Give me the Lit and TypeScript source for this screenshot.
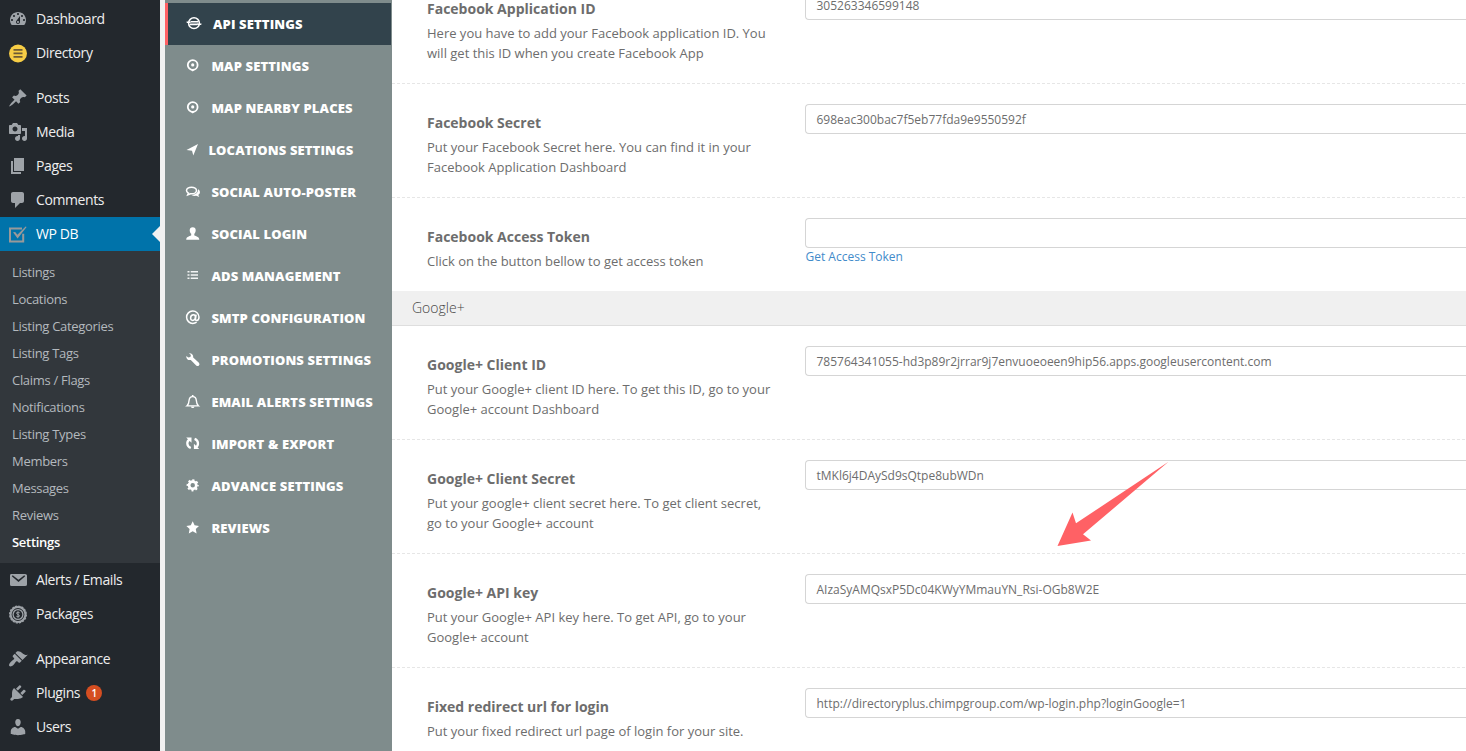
import { LitElement, html, css, svg } from 'lit';
import { customElement } from 'lit/decorators.js';
import { classMap } from 'lit/directives/class-map.js';

type Side = { label: string; icon: string; gap?: boolean; active?: boolean; badge?: string };

const p = (d: string) => svg`<path fill-rule="evenodd" d=${d}></path>`;

const ICONS: Record<string, unknown> = {
  dashboard: p('M3.76 16h12.48c1.1-1.37 1.76-3.11 1.76-5 0-4.42-3.58-8-8-8s-8 3.58-8 8c0 1.89.66 3.63 1.76 5zM10 4c.55 0 1 .45 1 1s-.45 1-1 1-1-.45-1-1 .45-1 1-1zM6 6c.55 0 1 .45 1 1s-.45 1-1 1-1-.45-1-1 .45-1 1-1zm8 0c.55 0 1 .45 1 1s-.45 1-1 1-1-.45-1-1 .45-1 1-1zm-5.370 5.550L12 7v6c0 1.100-.9 2-2 2s-2-.9-2-2c0-.57.24-1.080.63-1.450zM4 10c.55 0 1 .45 1 1s-.45 1-1 1-1-.45-1-1 .45-1 1-1zm12 0c.55 0 1 .45 1 1s-.45 1-1 1-1-.45-1-1 .45-1 1-1zm-5 3c0-.55-.45-1-1-1s-1 .45-1 1 .45 1 1 1 1-.45 1-1z'),
  directory: svg`<circle cx="10" cy="10.5" r="9" fill="#f7cd45"></circle><path d="M5.500 6.900h9M5.500 10.400h9M5.500 13.900h9" stroke="#6d5b35" stroke-width="1.800"></path>`,
  post: p('M10.44 3.02l1.82-1.82 6.36 6.35-1.83 1.82c-1.05-.68-2.48-.57-3.41.36l-.75.75c-.92.93-1.04 2.35-.35 3.41l-1.83 1.82-2.41-2.41-2.8 2.79c-.42.42-3.38 2.71-3.8 2.29s1.86-3.39 2.28-3.81l2.79-2.79L4.1 9.36l1.83-1.82c1.05.69 2.48.57 3.4-.36l.75-.75c.93-.92 1.05-2.35.36-3.41z'),
  media: p('M13 11V4c0-.55-.45-1-1-1h-1.67L9 1H5L3.67 3H2c-.55 0-1 .45-1 1v7c0 .55.45 1 1 1h10c.55 0 1-.45 1-1zM7 4.5c1.38 0 2.5 1.12 2.5 2.5S8.38 9.5 7 9.5 4.5 8.38 4.5 7 5.62 4.5 7 4.5zM14 6h5v10.5c0 1.38-1.12 2.5-2.5 2.5S14 17.88 14 16.5s1.12-2.5 2.5-2.5c.17 0 .34.02.5.05V9h-3V6zm-4 8.05V13h2v3.5c0 1.38-1.12 2.5-2.5 2.5S7 17.88 7 16.5 8.12 14 9.5 14c.17 0 .34.02.5.05z'),
  page: p('M6 15V2h10v13H6zm-1 1h8v2H3V5h2v11z'),
  comment: p('M5 2h9c1.1 0 2 .9 2 2v7c0 1.1-.9 2-2 2h-2l-5 5v-5H5c-1.1 0-2-.9-2-2V4c0-1.1.9-2 2-2z'),
  check: svg`<path d="M14 4.400H2v13h13.200V9.800" fill="none" stroke="currentColor" stroke-width="2"></path><path d="M5 8.200l2.200-.2 2.200 2.800L17.600 2.600l1 .5-9 11.400z"></path>`,
  mail: p('M3 4h14q2 0 2 1.500v9q0 1.500-2 1.500H3.500Q2 16 2 14.500v-9Q2 4 3 4zM3.800 6.300l6.700 5.700 6.700-5.700-.9-1.100-5.800 4.600-5.800-4.600z'),
  coin: svg`<circle cx="10" cy="10.500" r="7.400" fill="none" stroke="currentColor" stroke-width="2"></circle><circle cx="10" cy="10.500" r="8.400" fill="none" stroke="currentColor" stroke-width="1.200" stroke-dasharray="2.200 1.100"></circle><circle cx="10" cy="10.500" r="4.900" fill="none" stroke="currentColor" stroke-width="1.300"></circle><path d="M11.700 8.800q-1.700-1-2.900-.3-.8 1.300 1.200 2 2 .7 1.200 2-1.200.8-2.900-.3M10 7.300v6.400" fill="none" stroke="currentColor" stroke-width="1"></path>`,
  brush: p('M14.48 11.06L7.41 3.99l1.5-1.5c.5-.56 2.3-.47 3.51.32 1.21.8 1.43 1.28 2.91 2.1 1.18.64 2.45 1.26 4.45.85zm-.71.71L6.7 4.7 4.93 6.47c-.39.39-.39 1.02 0 1.41l1.06 1.06c.39.39.39 1.03 0 1.42-.6.6-1.43 1.11-2.21 1.69-.35.26-.7.53-1.01.84C1.43 14.23.4 16.08 1.4 17.07c.99 1 2.84-.03 4.18-1.36.31-.31.58-.66.85-1.02.57-.78 1.08-1.61 1.69-2.21.39-.39 1.02-.39 1.41 0l1.06 1.06c.39.39 1.02.39 1.41 0z'),
  plug: p('M13.11 4.36L9.87 7.6 8 5.73l3.24-3.24c.35-.34 1.05-.2 1.56.32.52.51.66 1.21.31 1.55zm-8 1.77l.91-1.12 9.01 9.01-1.19.84c-.71.71-2.63 1.16-3.82 1.16H6.14L4.9 17.26c-.59.59-1.54.59-2.12 0-.59-.58-.59-1.53 0-2.12l1.24-1.24v-3.88c0-1.13.4-3.19 1.09-3.89zm7.26 3.97l3.24-3.24c.34-.35 1.04-.21 1.55.31.52.51.66 1.21.31 1.55l-3.24 3.25z'),
  user: p('M10 9.25c-2.27 0-2.73-3.44-2.73-3.44C7 4.02 7.82 2 9.97 2c2.16 0 2.98 2.02 2.71 3.81 0 0-.41 3.44-2.68 3.44zm0 2.57L12.72 10c2.39 0 4.52 2.33 4.52 4.53v2.49s-3.65 1.13-7.24 1.13c-3.65 0-7.24-1.13-7.24-1.13v-2.49c0-2.25 1.94-4.48 4.47-4.48z'),
};

/* Tab glyphs share a 16x16 grid. */
const GLYPHS: Record<string, unknown> = {
  api: svg`<circle cx="8" cy="7.200" r="5.400" fill="none" stroke="currentColor" stroke-width="1.500"></circle><path d="M4.600 5h7.800v1H4.600zM4 6.500h8v1H4zM3.600 8h7.800v1.300H3.600zM.5 5.600h3.800v1.500H.8zM11.700 7.400h3.900l-.4 1.500h-3.800z"></path>`,
  pin: svg`<circle cx="7.700" cy="7" r="4.900" fill="none" stroke="currentColor" stroke-width="1.800"></circle><circle cx="7.700" cy="6.900" r="1.600"></circle><path d="M4.700 11h6l-3 2.500z"></path>`,
  arrow: p('M13 2L8.300 13.500 7 8.800 1.500 8z'),
  chat: svg`<path d="M6.500 3.200c2.800 0 5 1.400 5 3.300s-2.200 3.300-5 3.300l-1-.1-2.800 1.100.7-1.700C2.200 8.500 1.500 7.600 1.500 6.500c0-1.900 2.200-3.300 5-3.300z" fill="none" stroke="currentColor" stroke-width="1.500"></path><path d="M13 5.300c2.600 1.500 2.500 4.300.3 5.600l1 2-3-1.100c-1.800.3-3.600 0-4.800-.9 3.700 0 6.700-1.700 6.500-5.600z"></path>`,
  person: p('M7.700 1.300c2 0 3 1.200 3 3 0 1.600-.6 2.800-1.400 3.500v1.500c0 .9 5 .8 5 4.500H1.200c0-3.700 5-3.600 5-4.500V7.800C5.300 7.100 4.700 5.900 4.700 4.300c0-1.800 1-3 3-3z'),
  list: svg`<g opacity=".9"><path d="M2.500 3H4.500v1.600H2.500zM5.700 3h7.300v1.600H5.700zM2.500 6.200H4.500v1.600H2.500zM5.700 6.200h7.300v1.600H5.700zM2.500 9.400H4.500V11H2.500zM5.700 9.400h7.300V11H5.700z"></path></g>`,
  at: svg`<path d="M11.600 12.200Q9.900 13.400 7.800 13.400a6.200 6.200 0 1 1 6.200-6.400c0 2.200-1.100 3.400-2.300 3.400-1 0-1.400-.6-1.200-1.600L11.100 4.700M10.400 7.100c0 2.100-1.200 3.300-2.700 3.300-1.400 0-2.100-.9-2.100-2.300 0-1.800 1.200-3.300 3-3.300 1.300 0 1.800.9 1.800 2.300z" fill="none" stroke="currentColor" stroke-width="1.500"></path>`,
  wrench: p('M1.300 3.900C1 7 3.100 8.600 5.800 8L11.200 13.400Q12.600 14.700 13.900 13.500T13.900 10.800L8.200 5.400C8.600 2.700 6.700 1 4 1.200L5.900 3.100 5.400 5 3.300 5.600z'),
  bell: svg`<path d="M1.900 11.900C3.700 10.300 4 8.400 4.100 6.200 4.300 4 5.500 2.600 7.700 2.600s3.400 1.400 3.600 3.600c.1 2.200.4 4.100 2.200 5.700z" fill="none" stroke="currentColor" stroke-width="1.400"></path><path d="M6 12.400h3.400c0 2.200-3.400 2.200-3.400 0zM6.900 1h1.600v2H6.900z"></path>`,
  swap: svg`<path d="M4.600 3.400C1.200 5.400 1.600 10.400 5.800 12M10.800 11.400C14 9.400 13.700 4.300 9.600 2.800" fill="none" stroke="currentColor" stroke-width="2.300"></path><path d="M1.200 1.500h5.300v5.300zM14.200 13H8.900V7.700z"></path>`,
  gear: svg`<circle cx="7.700" cy="7.300" r="3.600" fill="none" stroke="currentColor" stroke-width="2.700"></circle><circle cx="7.700" cy="7.300" r="5.200" fill="none" stroke="currentColor" stroke-width="1.800" stroke-dasharray="2.080 2.004" stroke-dashoffset="1.040"></circle>`,
  star: p('M7.700 1.300l1.900 4 4.400.6-3.200 3.100.8 4.400-3.900-2.200-3.900 2.200.8-4.400L1.400 5.900l4.400-.6z'),
};

const MENU_TOP: Side[] = [
  { label: 'Dashboard', icon: 'dashboard' },
  { label: 'Directory', icon: 'directory' },
  { label: 'Posts', icon: 'post', gap: true },
  { label: 'Media', icon: 'media' },
  { label: 'Pages', icon: 'page' },
  { label: 'Comments', icon: 'comment' },
  { label: 'WP DB', icon: 'check', active: true },
];
const SUBMENU = ['Listings', 'Locations', 'Listing Categories', 'Listing Tags', 'Claims / Flags', 'Notifications', 'Listing Types', 'Members', 'Messages', 'Reviews', 'Settings'];
const MENU_BOTTOM: Side[] = [
  { label: 'Alerts / Emails', icon: 'mail' },
  { label: 'Packages', icon: 'coin' },
  { label: 'Appearance', icon: 'brush', gap: true },
  { label: 'Plugins', icon: 'plug', badge: '1' },
  { label: 'Users', icon: 'user' },
];
const TABS: [string, string][] = [
  ['api', 'API SETTINGS'], ['pin', 'MAP SETTINGS'], ['pin', 'MAP NEARBY PLACES'], ['arrow', 'LOCATIONS SETTINGS'],
  ['chat', 'SOCIAL AUTO-POSTER'], ['person', 'SOCIAL LOGIN'], ['list', 'ADS MANAGEMENT'], ['at', 'SMTP CONFIGURATION'],
  ['wrench', 'PROMOTIONS SETTINGS'], ['bell', 'EMAIL ALERTS SETTINGS'], ['swap', 'IMPORT & EXPORT'], ['gear', 'ADVANCE SETTINGS'], ['star', 'REVIEWS'],
];
type Field = { title: string; lines: string[]; value: string; link?: string; last?: boolean };
const FACEBOOK: Field[] = [
  { title: 'Facebook Application ID', lines: ['Here you have to add your Facebook application ID. You', 'will get this ID when you create Facebook App'], value: '305263346599148' },
  { title: 'Facebook Secret', lines: ['Put your Facebook Secret here. You can find it in your', 'Facebook Application Dashboard'], value: '698eac300bac7f5eb77fda9e9550592f' },
  { title: 'Facebook Access Token', lines: ['Click on the button bellow to get access token'], value: '', link: 'Get Access Token', last: true },
];
const GOOGLE: Field[] = [
  { title: 'Google+ Client ID', lines: ['Put your Google+ client ID here. To get this ID, go to your', 'Google+ account Dashboard'], value: '785764341055-hd3p89r2jrrar9j7envuoeoeen9hip56.apps.googleusercontent.com' },
  { title: 'Google+ Client Secret', lines: ['Put your google+ client secret here. To get client secret,', 'go to your Google+ account'], value: 'tMKl6j4DAySd9sQtpe8ubWDn' },
  { title: 'Google+ API key', lines: ['Put your Google+ API key here. To get API, go to your', 'Google+ account'], value: 'AIzaSyAMQsxP5Dc04KWyYMmauYN_Rsi-OGb8W2E' },
  { title: 'Fixed redirect url for login', lines: ['Put your fixed redirect url page of login for your site.'], value: 'http://directoryplus.chimpgroup.com/wp-login.php?loginGoogle=1' },
];

@customElement('admin-menu')
class AdminMenu extends LitElement {
  static styles = css`
    :host { display: block; width: 160px; background: #23282d; color: #eee; font: 14px/34px 'Open Sans', sans-serif; letter-spacing: -0.4px; padding-top: 2px; box-sizing: border-box; }
    .item { display: flex; height: 34px; align-items: center; padding-left: 8px; gap: 8px; position: relative; }
    .gap { margin-top: 11px; }
    .item svg { width: 20px; height: 20px; fill: currentColor; color: #9ea3a8; flex: none; }
    .active { background: #0073aa; color: #fff; }
    .active svg { color: #999; }
    .active::after { content: ''; position: absolute; right: 0; top: 9px; border: 8px solid transparent; border-right-color: #f1f1f1; border-left: 0; }
    .sub { background: #32373c; padding: 8px 0 7px 12px; font-size: 13px; line-height: 27px; color: #b4b9be; height: 297px; letter-spacing: -0.3px; }
    .sub div { height: 27px; }
    .sub .current { color: #fff; font-weight: 600; }
    .badge { width: 16px; height: 16px; border-radius: 8px; background: #d54e21; color: #fff; font-size: 10px; line-height: 16px; font-weight: 600; text-align: center; margin-left: -2px; }
  `;
  private row(i: Side) {
    return html`<div class=${classMap({ item: true, gap: !!i.gap, active: !!i.active })}><svg viewBox="0 0 20 20">${ICONS[i.icon]}</svg><span>${i.label}</span>${i.badge ? html`<span class="badge">${i.badge}</span>` : ''}</div>`;
  }
  render() {
    return html`${MENU_TOP.map((i) => this.row(i))}
      <div class="sub">${SUBMENU.map((s) => html`<div class=${classMap({ current: s === 'Settings' })}>${s}</div>`)}</div>
      ${MENU_BOTTOM.map((i) => this.row(i))}`;
  }
}

@customElement('settings-tabs')
class SettingsTabs extends LitElement {
  static styles = css`
    :host { display: block; width: 227px; box-sizing: border-box; background: #7f8c8c; padding: 3px 1px 0 0; color: #fff; font: 800 13px/42px 'Open Sans', sans-serif; letter-spacing: 0.14px; }
    .tab { display: flex; height: 42px; align-items: center; padding-left: 20px; white-space: nowrap; }
    .tab svg { width: 16px; height: 16px; fill: currentColor; margin-right: 10.4px; flex: none; }
    .tab.on { background: #32434c; border-left: 3px solid #ff6165; padding-left: 18px; }
    .tab.on svg { margin-right: 11px; }
    .tab.arrow svg { margin-right: 7.4px; }
  `;
  render() {
    return html`${TABS.map(([g, t], i) => html`<div class=${classMap({ tab: true, on: i === 0, arrow: g === 'arrow' })}><svg viewBox="0 0 16 16">${GLYPHS[g]}</svg><span>${t}</span></div>`)}`;
  }
}

@customElement('settings-form')
class SettingsForm extends LitElement {
  static styles = css`
    :host { display: block; flex: 1; min-width: 0; overflow: hidden; background: #fff; color: #6d6d6d; font: 13px/20px 'Open Sans', sans-serif; }
    .first { margin-top: -30px; }
    .field { display: grid; grid-template-columns: 378px 1fr; box-sizing: border-box; height: 114px; padding: 20px 0 0 35px; background: repeating-linear-gradient(90deg, #e6e6e6 0 3px, transparent 3px 5px) 0 100% / 100% 1px no-repeat; }
    .field.last { height: 93px; background: none; }
    .title { font-size: 14px; font-weight: 700; line-height: 20px; padding-top: 9px; margin-bottom: 4px; }
    .line { white-space: nowrap; }
    .input { height: 30px; box-sizing: border-box; border: 1px solid #d5d5d5; border-right: 0; border-radius: 4px 0 0 4px; padding: 1px 10px 0 10.5px; font-size: 12px; line-height: 28px; white-space: nowrap; }
    .link { color: #428bca; font-size: 12px; line-height: 18px; padding-left: 0.5px; }
    .bar { height: 35px; box-sizing: border-box; background: #f0f0f0; border-bottom: 1px solid #dedede; padding-left: 20px; font-size: 14px; line-height: 33px; font-weight: 300; color: #444; }
  `;
  private field(f: Field) {
    return html`<div class=${classMap({ field: true, last: !!f.last })}>
      <div><div class="title">${f.title}</div>${f.lines.map((l) => html`<div class="line">${l}</div>`)}</div>
      <div><div class="input">${f.value}</div>${f.link ? html`<div class="link">${f.link}</div>` : ''}</div>
    </div>`;
  }
  render() {
    return html`<div class="first">${FACEBOOK.map((f) => this.field(f))}</div>
      <div class="bar">Google+</div>
      <div>${GOOGLE.map((f) => this.field(f))}</div>`;
  }
}

@customElement('app-root')
class AppRoot extends LitElement {
  static styles = css`
    :host { display: flex; position: relative; width: 100%; height: 751px; overflow: hidden; background: #f1f1f1; }
    settings-tabs { margin-left: 5px; }
    .pointer { position: absolute; left: 1057px; top: 461px; width: 112px; height: 86px; fill: #ff6165; }
  `;
  render() {
    return html`<admin-menu></admin-menu><settings-tabs></settings-tabs><settings-form></settings-form>
      <svg class="pointer" viewBox="0 0 112 86"><path d="M111.500 0.800L26 73.300 34 79.500 0.500 85 15.500 51.500 19 62.300z"></path></svg>`;
  }
}
